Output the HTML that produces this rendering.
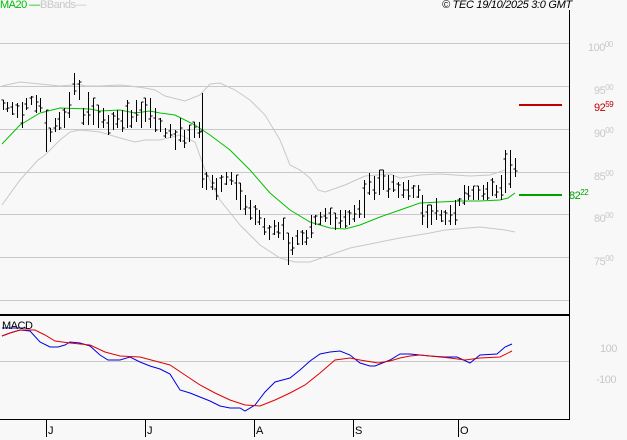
<!DOCTYPE html>
<html><head><meta charset="utf-8"><style>
html,body{margin:0;padding:0;background:#f8f8f8;width:627px;height:440px;overflow:hidden;font-family:"Liberation Sans",sans-serif}
.l{position:absolute;font-size:11px;color:#c8c8c8;letter-spacing:-0.5px}
.l sup{font-size:8px;vertical-align:4px}
</style></head><body>
<svg id="s" width="627" height="440" style="position:absolute;left:0;top:0" xmlns="http://www.w3.org/2000/svg">
<g stroke="#c8c8c8" stroke-width="1" shape-rendering="crispEdges">
<line x1="0" y1="43.5" x2="569" y2="43.5"/><line x1="0" y1="86.5" x2="569" y2="86.5"/>
<line x1="0" y1="129.5" x2="569" y2="129.5"/><line x1="0" y1="172.5" x2="569" y2="172.5"/>
<line x1="0" y1="214.5" x2="569" y2="214.5"/><line x1="0" y1="257.5" x2="569" y2="257.5"/>
<line x1="0" y1="300.5" x2="569" y2="300.5"/><line x1="0" y1="361.5" x2="569" y2="361.5"/>
</g>
<polyline fill="none" stroke="#c8c8c8" points="2,86 20,82 40,84 60,86 72,85 77,84 85,86 100,86 120,85 130,86 145,88 155,90 165,96 185,101 200,95 210,84 220,83 235,90 250,100 265,115 280,140 290,165 300,170 310,178 318,190 325,192 345,185 365,176 390,174 400,178 420,175 440,174 470,176 490,175 505,170"/>
<polyline fill="none" stroke="#c8c8c8" points="2,205 20,180 38,160 45,155 60,140 70,132 80,130 100,132 120,138 135,142 145,140 160,140 180,135 195,142 205,170 220,200 240,225 260,245 280,258 295,262 310,262 330,255 350,248 380,242 400,238 430,233 445,230 480,227 505,230 515,232"/>
<polyline fill="none" stroke="#00c000" points="2,144 20,125 40,113 60,108 90,109 100,111 120,110 135,113 150,111 160,113 175,115 195,125 210,135 230,150 250,170 270,193 290,210 310,222 330,228 345,229 360,225 380,217 400,210 420,203 440,202 460,201 480,201 500,200 508,198 515,193"/>
<g id="bars" stroke="#000" stroke-width="1.2" shape-rendering="crispEdges"></g>
<line x1="519" y1="105" x2="562" y2="105" stroke="#c00000" stroke-width="2"/>
<line x1="519" y1="195" x2="562" y2="195" stroke="#00a000" stroke-width="2"/>
<line x1="0" y1="315" x2="569" y2="315" stroke="#000" stroke-width="2"/>
<line x1="569.5" y1="10" x2="569.5" y2="420" stroke="#000"/>
<line x1="0" y1="419.5" x2="570" y2="419.5" stroke="#000"/>
<g stroke="#000"><line x1="46.5" y1="419" x2="46.5" y2="437"/><line x1="145.5" y1="419" x2="145.5" y2="437"/><line x1="254.5" y1="419" x2="254.5" y2="437"/><line x1="353.5" y1="419" x2="353.5" y2="437"/><line x1="458.5" y1="419" x2="458.5" y2="437"/></g>
<polyline fill="none" stroke="#0000e0" points="2,336 10,333 20,330 30,331 40,342 50,347 58,347 65,345 70,342 80,343 90,346 100,355 108,360 120,360 130,357 140,362 150,366 160,369 170,374 180,390 190,393 210,401 220,406 230,408 240,408 245,411 255,405 265,392 275,382 290,378 300,370 310,361 320,354 330,352 340,351 350,355 360,363 370,366 375,366 385,362 390,360 400,354 410,354 420,355 430,356 445,357 457,357 470,363 480,355 497,354 505,347 512,344"/>
<polyline fill="none" stroke="#e00000" points="2,336 10,333 20,330 35,330 45,335 55,341 70,343 90,345 105,352 120,356 140,357 155,361 170,365 185,375 200,385 215,393 230,400 245,405 260,406 275,400 290,393 305,385 320,373 335,360 350,358 360,360 372,362 378,363 390,361 400,358 410,356 420,355 430,356 450,358 465,360 480,358 500,357 512,351"/>
<line x1="2" y1="328" x2="26" y2="328" stroke="#0000e0"/>
</svg>
<div style="position:absolute;left:0;top:-1px;font-size:11px;color:#00c000;letter-spacing:-0.5px">MA20 —</div>
<div style="position:absolute;left:40px;top:-1px;font-size:11px;color:#c8c8c8;letter-spacing:-0.5px">BBands—</div>
<div style="position:absolute;left:442px;top:-1px;font-size:11px;font-style:italic;color:#000;letter-spacing:-0.3px">© TEC 19/10/2025 3:0 GMT</div>
<div style="position:absolute;left:2px;top:320px;font-size:11px;color:#000;letter-spacing:-0.5px">MACD</div>
<div class="l" style="left:588px;top:40px">100<sup>00</sup></div>
<div class="l" style="left:594px;top:83px">95<sup>00</sup></div>
<div class="l" style="left:594px;top:100px;color:#c00000">92<sup>59</sup></div>
<div class="l" style="left:594px;top:126px">90<sup>00</sup></div>
<div class="l" style="left:594px;top:169px">85<sup>00</sup></div>
<div class="l" style="left:569px;top:188px;color:#00a000">82<sup>22</sup></div>
<div class="l" style="left:594px;top:211px">80<sup>00</sup></div>
<div class="l" style="left:594px;top:254px">75<sup>00</sup></div>
<div class="l" style="left:600px;top:343px">100</div>
<div class="l" style="left:596px;top:374px">-100</div>
<div style="position:absolute;left:48px;top:425px;font-size:11px">J</div>
<div style="position:absolute;left:147px;top:425px;font-size:11px">J</div>
<div style="position:absolute;left:256px;top:425px;font-size:11px">A</div>
<div style="position:absolute;left:355px;top:425px;font-size:11px">S</div>
<div style="position:absolute;left:460px;top:425px;font-size:11px">O</div>
<script>
var d=[[3,100,110],[7,102,112],[12,102,115],[17,103,118],[22,102,128],[26,98,110],[31,96,105],[36,95,113],[40,98,112],[46,110,152],[50,128,142],[55,118,132],[59,112,130],[64,108,128],[69,92,118],[74,73,95],[79,80,100],[83,108,125],[88,92,125],[93,98,125],[98,105,128],[103,108,128],[108,115,135],[113,112,130],[117,110,128],[122,110,132],[127,100,128],[131,110,128],[136,100,122],[141,102,128],[145,98,122],[150,98,128],[155,108,132],[160,118,132],[165,128,138],[170,124,138],[175,130,150],[180,118,142],[184,130,148],[189,125,142],[194,122,138],[199,122,138],[202,93,188],[206,172,190],[212,175,190],[216,178,200],[221,175,192],[226,172,185],[231,172,185],[236,175,200],[240,183,210],[245,195,215],[250,200,220],[255,205,225],[259,210,225],[264,218,235],[269,225,240],[274,220,235],[278,222,238],[283,218,240],[288,233,265],[292,237,255],[297,230,245],[302,230,245],[306,230,245],[311,215,238],[315,215,225],[320,212,225],[325,208,222],[330,208,225],[335,213,230],[340,210,228],[345,210,228],[349,210,225],[354,205,222],[359,200,218],[364,180,218],[369,173,195],[374,176,200],[379,170,195],[383,170,190],[388,175,198],[393,175,192],[398,182,198],[403,182,198],[408,180,200],[413,185,198],[418,185,198],[422,195,225],[427,205,228],[431,205,225],[436,198,220],[441,210,222],[445,210,225],[450,205,225],[455,200,225],[459,198,206],[464,185,205],[468,186,200],[473,186,200],[478,186,200],[483,185,200],[487,182,200],[492,178,196],[496,185,198],[501,175,200],[505,150,193],[510,150,188],[515,158,177]];
var g=document.getElementById('bars'),h='';
d.forEach(function(b,i){var x=b[0]+0.5,o=b[1]+(b[2]-b[1])*((i*37)%10)/10,c=b[1]+(b[2]-b[1])*((i*53+3)%10)/10;
h+='<line x1="'+x+'" y1="'+b[1]+'" x2="'+x+'" y2="'+b[2]+'"/><line x1="'+(x-2)+'" y1="'+Math.round(o)+'" x2="'+x+'" y2="'+Math.round(o)+'"/><line x1="'+x+'" y1="'+Math.round(c)+'" x2="'+(x+2)+'" y2="'+Math.round(c)+'"/>';});
g.innerHTML=h;
</script>
</body></html>
